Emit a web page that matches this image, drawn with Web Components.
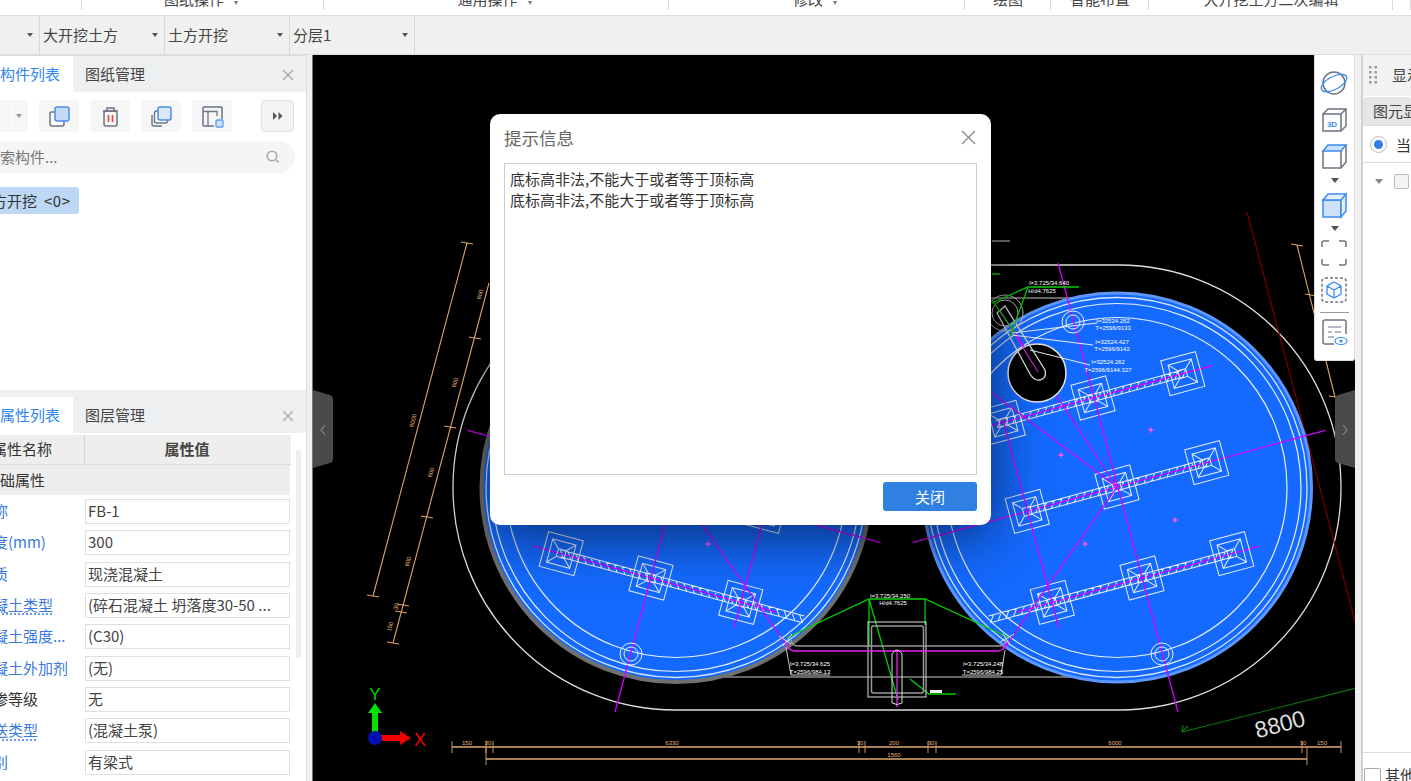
<!DOCTYPE html>
<html lang="zh">
<head>
<meta charset="utf-8">
<title>提示信息</title>
<style>
    html, body { margin: 0; height: 100%; overflow: hidden; background: #f0f0f0; }
    body { font: 15px "Noto Sans CJK SC", "Noto Sans", sans-serif; color: #333; }
</style>
</head>
<body>
<app-shell>
    <app-ribbon></app-ribbon>
    <app-toolbar></app-toolbar>
    <left-column></left-column>
    <cad-canvas>
        <view-tools></view-tools>
        <message-dialog title-text="提示信息">
            底标高非法,不能大于或者等于顶标高<br>底标高非法,不能大于或者等于顶标高
        </message-dialog>
    </cad-canvas>
    <display-panel></display-panel>
</app-shell>

<script>
class AppShell extends HTMLElement {
    connectedCallback() {
        this.attachShadow({ mode: 'open' });
        this.shadowRoot.innerHTML = `
            <style>
                :host { display: flex; flex-direction: column; width: 1411px; height: 781px; overflow: hidden; }
                .main { flex: 1; display: flex; min-height: 0; }
                ::slotted(left-column) { flex: none; }
            </style>
            <slot name="top"></slot>
            <div class="main"><slot></slot></div>
        `;
        this.querySelector('app-ribbon').slot = 'top';
        this.querySelector('app-toolbar').slot = 'top';
    }
}

class AppRibbon extends HTMLElement {
    connectedCallback() {
        const groups = [
            [82, '', 0], [242, '图纸操作', 1], [345, '通用操作', 1], [296, '修改', 1],
            [86, '绘图', 0], [98, '智能布置', 0], [244, '大开挖土方二次编辑', 0], [18, '', 0]
        ];
        this.attachShadow({ mode: 'open' });
        this.shadowRoot.innerHTML = `
            <style>
                :host { display: flex; height: 16px; background: #fff; border-bottom: 1px solid #dcdcdc; box-sizing: border-box; overflow: hidden; }
                .group { position: relative; height: 15px; display: flex; justify-content: center; color: #444; white-space: nowrap; line-height: 20px; box-sizing: border-box; }
                .group span { margin-top: -11px; }
                .group em { font-style: normal; font-size: 8px; margin: 0 4px 0 10px; color: #777; }
                .group::after { content: ""; position: absolute; right: 0; top: 0; height: 10px; width: 1px; background: #d8d8d8; }
            </style>
            ${groups.map(g => `<div class="group" style="width:${g[0]}px"><span>${g[1]}${g[2] ? '<em>▾</em>' : ''}</span></div>`).join('')}
        `;
    }
}

class AppToolbar extends HTMLElement {
    connectedCallback() {
        const combos = [[40, ''], [125, '大开挖土方'], [125, '土方开挖'], [125, '分层1']];
        this.attachShadow({ mode: 'open' });
        this.shadowRoot.innerHTML = `
            <style>
                :host { display: flex; height: 39px; background: #f0f0f0; border-bottom: 1px solid #dcdcdc; box-sizing: border-box; }
                .combo { display: flex; align-items: center; box-sizing: border-box; border-right: 1px solid #d8d8d8; padding: 0 6px 2px 3px; color: #444; }
                .combo span { flex: 1; }
                .combo i { width: 0; height: 0; border: 3.5px solid transparent; border-top: 4px solid #555; border-bottom: 0; margin-top: 2px; }
            </style>
            ${combos.map(c => `<div class="combo" style="width:${c[0]}px"><span>${c[1]}</span><i></i></div>`).join('')}
        `;
    }
}

class PanelTabs extends HTMLElement {
    connectedCallback() {
        this.attachShadow({ mode: 'open' });
        this.shadowRoot.innerHTML = `
            <style>
                :host { display: flex; align-items: stretch; height: 36px; background: #eeeff1; flex: none; }
                .active { width: 73px; background: #fff; color: #2f86ee; line-height: 36px; white-space: nowrap; }
                .other { margin-left: 12px; line-height: 36px; color: #444; flex: 1; }
                svg { margin: 13px 12px 0 0; }
            </style>
            <div class="active">${this.getAttribute('active')}</div>
            <div class="other">${this.getAttribute('other')}</div>
            <svg width="12" height="12" viewBox="0 0 12 12"><path d="M1 1l10 10M11 1L1 11" stroke="#aaa" stroke-width="1.4"/></svg>
        `;
    }
}

class ComponentPanel extends HTMLElement {
    connectedCallback() {
        const copy = `<rect x="3" y="8" width="14" height="14" rx="2" fill="#fff" stroke="#6b7484" stroke-width="1.5"/><rect x="8" y="3" width="14" height="14" rx="2" fill="#c5d9f5" stroke="#4a8fe8" stroke-width="1.5"/>`;
        const del = `<path d="M5 7h15M9 7V4h7v3" fill="none" stroke="#6b7484" stroke-width="1.5"/><rect x="6" y="7" width="13" height="15" rx="2" fill="none" stroke="#6b7484" stroke-width="1.5"/><path d="M10.500 11v7M14.500 11v7" stroke="#e8453c" stroke-width="1.6"/>`;
        const stack = `<path d="M3 11v9a2 2 0 0 0 2 2h8" fill="none" stroke="#6b7484" stroke-width="1.4"/><rect x="5.500" y="7" width="13" height="12" rx="2" fill="#fff" stroke="#6b7484" stroke-width="1.4"/><rect x="9" y="3" width="13" height="13" rx="2" fill="#dbe8fa" stroke="#4a8fe8" stroke-width="1.5"/>`;
        const save = `<path d="M14 22H4Q3 22 3 21V4Q3 3 4 3H21Q22 3 22 4V15" fill="none" stroke="#6b7484" stroke-width="1.5"/><path d="M3 7.500H17V12M8 7.500V22" stroke="#6b7484" stroke-width="1.300" fill="none"/><rect x="16" y="16" width="7" height="7" rx="1" fill="#cfe0f8" stroke="#5b9bef" stroke-width="1.300"/>`;
        this.attachShadow({ mode: 'open' });
        this.shadowRoot.innerHTML = `
            <style>
                :host { display: flex; flex-direction: column; height: 335px; background: #fff; border-top: 1px solid #dcdcdc; box-sizing: border-box; overflow: hidden; }
                .tools { display: flex; height: 32px; margin-top: 8px; flex: none; }
                .tool { width: 40px; height: 32px; border-radius: 4px; background: #f6f6f6; margin-left: 11px; display: flex; align-items: center; justify-content: center; }
                .first { width: 28px; margin-left: 0; justify-content: flex-end; padding-right: 6px; box-sizing: border-box; border-radius: 0 4px 4px 0; position: relative; }
                .first::before { content: ""; position: absolute; left: 11px; top: 0; bottom: 0; width: 1px; background: #fff; }
                .first i { width: 0; height: 0; border: 3px solid transparent; border-top: 4px solid #999; border-bottom: 0; }
                .more { width: 33px; margin-left: 29px; background: #f4f4f4; border: 1px solid #e2e2e2; box-sizing: border-box; }
                .search { display: flex; align-items: center; height: 32px; width: 310px; margin: 9px 0 0 -15px; padding-bottom: 1px; background: #f5f5f5; border-radius: 0 16px 16px 0; color: #777; flex: none; box-sizing: border-box; }
                .search span { flex: 1; }
                .search svg { margin: 1px 15px 0 0; }
                .chip { display: inline-block; align-self: flex-start; height: 27px; line-height: 27px; margin: 14px 0 0 0; background: #bcd8f4; border-radius: 0 3px 3px 0; width: 79px; overflow: hidden; white-space: nowrap; flex: none; }
                .chip span { display: block; margin-left: -23px; }
                .chip em { font-style: normal; margin-left: 7px; letter-spacing: .5px; }
            </style>
            <panel-tabs active="构件列表" other="图纸管理"></panel-tabs>
            <div class="tools">
                <div class="tool first"><i></i></div>
                <div class="tool"><svg width="25" height="25" viewBox="0 0 25 25">${copy}</svg></div>
                <div class="tool"><svg width="25" height="25" viewBox="0 0 25 25">${del}</svg></div>
                <div class="tool"><svg width="25" height="25" viewBox="0 0 25 25">${stack}</svg></div>
                <div class="tool"><svg width="25" height="25" viewBox="0 0 25 25">${save}</svg></div>
                <div class="tool more"><svg width="10" height="8" viewBox="0 0 10 8"><path d="M0 0l4 4-4 4zM5.500 0l4 4-4 4z" fill="#555"/></svg></div>
            </div>
            <div class="search">
                <span>搜索构件...</span>
                <svg width="14" height="14" viewBox="0 0 14 14"><circle cx="6" cy="6" r="4.700" fill="none" stroke="#aaa" stroke-width="1.6"/><path d="M9.500 9.500l3 3" stroke="#aaa" stroke-width="1.6"/></svg>
            </div>
            <div class="chip"><span>土方开挖<em>&lt;0&gt;</em></span></div>
        `;
    }
}

class PropRow extends HTMLElement {
    connectedCallback() {
        const kind = this.getAttribute('kind') || '';
        this.attachShadow({ mode: 'open' });
        this.shadowRoot.innerHTML = `
            <style>
                :host { display: flex; height: 31.330px; flex: none; }
                .name { width: 85px; overflow: hidden; white-space: nowrap; line-height: 29px; flex: none; color: #333; }
                .name span { display: block; margin-left: -22px; }
                .link { color: #3a78e0; }
                .under span { text-decoration: underline dotted; text-underline-offset: 3px; }
                .value { width: 205px; height: 25px; margin-top: 3px; box-sizing: border-box; border: 1px solid #dfdfdf; background: #fff; line-height: 21px; padding-left: 2px; color: #444; white-space: nowrap; overflow: hidden; }
            </style>
            <div class="name ${kind}"><span>${this.getAttribute('name')}</span></div>
            <div class="value">${this.getAttribute('value')}</div>
        `;
    }
}

class PropertyPanel extends HTMLElement {
    connectedCallback() {
        this.attachShadow({ mode: 'open' });
        this.shadowRoot.innerHTML = `
            <style>
                :host { display: flex; flex-direction: column; flex: 1; min-height: 0; margin-top: 7px; background: #fff; overflow: hidden; }
                .body { display: flex; flex: 1; min-height: 0; }
                .table { width: 291px; flex: none; padding-top: 2px; }
                .head { display: flex; height: 29px; background: #eee; border-bottom: 1px solid #dcdcdc; line-height: 28px; }
                .head .n { width: 84px; border-right: 1px solid #d6d6d6; overflow: hidden; white-space: nowrap; }
                .head .n span { display: block; margin-left: -8px; }
                .head .v { flex: 1; text-align: center; font-weight: 700; color: #444; margin-left: -2px; }
                .section { height: 30px; width: 290px; background: #eee; line-height: 30px; overflow: hidden; white-space: nowrap; margin-bottom: 1px; }
                .section span { display: block; margin-left: -15px; }
                .bar { width: 5px; height: 208px; margin: 17px 0 0 5px; background: #eee; border-radius: 2px; }
            </style>
            <panel-tabs active="属性列表" other="图层管理"></panel-tabs>
            <div class="body">
                <div class="table">
                    <div class="head"><div class="n"><span>属性名称</span></div><div class="v">属性值</div></div>
                    <div class="section"><span>基础属性</span></div>
                    <prop-row kind="link" name="名称" value="FB-1"></prop-row>
                    <prop-row kind="link" name="厚度(mm)" value="300"></prop-row>
                    <prop-row kind="link" name="材质" value="现浇混凝土"></prop-row>
                    <prop-row kind="link under" name="混凝土类型" value="(碎石混凝土 坍落度30-50 ..."></prop-row>
                    <prop-row kind="link" name="混凝土强度..." value="(C30)"></prop-row>
                    <prop-row kind="link" name="混凝土外加剂" value="(无)"></prop-row>
                    <prop-row name="抗渗等级" value="无"></prop-row>
                    <prop-row kind="link under" name="泵送类型" value="(混凝土泵)"></prop-row>
                    <prop-row kind="link" name="类别" value="有梁式"></prop-row>
                </div>
                <div class="bar"></div>
            </div>
        `;
    }
}

class LeftColumn extends HTMLElement {
    connectedCallback() {
        this.attachShadow({ mode: 'open' });
        this.shadowRoot.innerHTML = `
            <style>
                :host { display: flex; flex-direction: column; width: 307px; flex: none; background: #f0f0f0; border-right: 1px solid #dcdcdc; box-sizing: border-box; }
            </style>
            <component-panel></component-panel>
            <property-panel></property-panel>
        `;
    }
}

// the drawing is written in page coordinates, hence the viewBox
class CadCanvas extends HTMLElement {
    line(x1, y1, x2, y2, color, w = 1) {
        return `<line x1="${x1}" y1="${y1}" x2="${x2}" y2="${y2}" stroke="${color}" stroke-width="${w}"/>`;
    }

    label(x, y, text, color = '#fff', size = 6, rot = 0) {
        const t = rot ? ` transform="rotate(${rot} ${x} ${y})"` : '';
        return `<text x="${x}" y="${y}" fill="${color}" font-size="${size}" text-anchor="middle" font-family="Liberation Sans"${t}>${text}</text>`;
    }

    // foundation pad: outer + inner square with the slope lines
    cap(x) {
        const w = '#e8eefc';
        return `<g transform="translate(${x} 0)" fill="none" stroke="${w}" stroke-width="1">
            <rect x="-18" y="-18" width="36" height="36"/>
            <rect x="-12" y="-12" width="24" height="24"/>
            <path d="M-12-12L-4-4M12-12L4-4M-12 12L-4 4M12 12L4 4M-4-4H4V4H-4Z"/>
        </g>`;
    }

    strip(cx, cy, from, to, magFrom, magTo) {
        let hatch = '';
        for (let x = from; x < to; x += 8) hatch += `M${x} 3.500l5-7`;
        return `<g transform="translate(${cx} ${cy}) rotate(-15.200)">
            <path d="M${from}-3.500H${to}M${from} 3.500H${to}${hatch}" fill="none" stroke="#e8eefc" stroke-width="1"/>
            ${this.line(magFrom, 0, magTo, 0, '#d400ff', 1.300)}
            ${this.cap(-93)}${this.cap(0)}${this.cap(93)}
        </g>`;
    }

    well(x, y) {
        return `<circle cx="${x}" cy="${y}" r="11" fill="none" stroke="#e8eefc"/><circle cx="${x}" cy="${y}" r="7" fill="none" stroke="#e8eefc"/>`;
    }

    mark(x, y) {
        return `<path d="M${x - 3} ${y}h6M${x} ${y - 3}v6" stroke="#ff40ff" stroke-width="1"/><circle cx="${x}" cy="${y}" r="1.400" fill="#ff60ff"/>`;
    }

    // one tank; the left one is the same drawing mirrored
    tank(rim, rimWidth) {
        const m = '#d400ff';
        const c = { x: 1117, y: 487.500 };
        return `
            <circle cx="${c.x}" cy="${c.y}" r="194.500" fill="#146aff" stroke="${rim}" stroke-width="${rimWidth}"/>
            <circle cx="${c.x}" cy="${c.y}" r="190" fill="none" stroke="#d8e4ff" stroke-width="1.300"/>
            <circle cx="${c.x}" cy="${c.y}" r="184" fill="none" stroke="#e8eefc" stroke-width="1.200"/>
            <circle cx="${c.x}" cy="${c.y}" r="170" fill="none" stroke="#e8eefc" stroke-width="1.200"/>
            ${this.strip(1093, 398, -100, 93, -120, 123)}
            ${this.strip(1117, 487, -93, 93, -212, 216)}
            ${this.strip(1142, 578, -158, 93, -130, 122)}
            ${this.line(1058, 263, 1178, 712, m, 1.300)}
            ${this.line(992, 393, 1117, 487, m, 1.300)}
            ${this.line(1013, 330, 1117, 487, m, 1.300)}
            ${this.line(1117, 487, 1003, 650, m, 1.300)}
            ${this.line(1003, 420, 1059, 628, m, 1.300)}
            ${this.mark(1151, 430)}${this.mark(1061, 455)}${this.mark(1175, 520)}${this.mark(1085, 544)}
            ${this.well(1162, 654)}
        `;
    }

    dims() {
        const o = '#dca468';
        const b = '#a87f52';
        const oblique = [[467, 243, 373, 596], [489, 283, 393, 643], [1297, 245, 1335, 397]];
        const ticks = [[467, 243], [373, 596], [475, 338], [450, 427], [427, 517], [403, 605], [401, 612], [393, 643], [1297, 245], [1311, 295], [1335, 397]];
        const angled = [[415, 421, '6000', 6], [482, 295, '600', 6], [457, 383, '600', 6], [433, 473, '600', 6], [410, 562, '600', 6], [392, 627, '150', 6], [398, 607, '30', 6]];
        const stops = [452, 486, 493, 859, 865, 928, 936, 1302, 1341];
        const below = [[467, '150'], [488, '30'], [672, '6330'], [860, '30'], [894, '200'], [931, '30'], [1115, '6000'], [1303, '30'], [1322, '150']];
        return `
            ${oblique.map(l => this.line(...l, o, 1.100)).join('')}
            ${ticks.map(t => this.line(t[0] - 6, t[1] - 1, t[0] + 6, t[1] + 1, o, 1.100)).join('')}
            ${angled.map(a => this.label(a[0], a[1], a[2], '#e8b070', a[3], -75)).join('')}
            ${this.line(452, 747, 1341, 747, b, 2)}
            ${this.line(486, 759, 1307, 759, b, 2)}
            ${stops.map(x => this.line(x, 741, x, 753, '#c8965e', 1)).join('')}
            ${this.line(486, 747, 486, 765, '#c8965e', 1)}${this.line(1307, 747, 1307, 765, '#c8965e', 1)}
            ${below.map(l => this.label(l[0], 745, l[1], '#e8b070', 6)).join('')}
            ${this.label(894, 757, '1560', '#e8b070', 6)}
        `;
    }

    outlet() {
        const g = '#00d000';
        const w = '#ddd';
        return `
            <path d="M786 638L869 599H925L1010 638M869 599V647M869 599L898 700M925 599V625M910 679L929 694H956" fill="none" stroke="${g}" stroke-width="1.300"/>
            <rect x="868" y="622" width="58" height="75" fill="none" stroke="${w}"/>
            <rect x="871.500" y="626" width="52" height="67" rx="2" fill="none" stroke="#999" stroke-width="1.500"/>
            <path d="M791 640Q792 646 798 646H1000Q1005 646 1006 640" fill="none" stroke="#999" stroke-width="1.500"/>
            <path d="M786 640Q787 651 795 651H998Q1004 651 1005 643M897 651V707" fill="none" stroke="#f020f0" stroke-width="1.300"/>
            <path d="M892 703V654Q897 646 902 654V703Q897 706 892 703Z" fill="none" stroke="#ddd"/>
            <path d="M786 647L791 675H830M1005 650L1001 675H962" fill="none" stroke="#ccc"/>
            <path d="M779 636l12 8M792 634l-9 12M1000 642l14-8M1003 634l8 12" stroke="#ddd"/>
            ${this.label(810, 666, 'I=3.725/34.625')}${this.label(810, 674, 'T=2596/984.13')}
            ${this.label(983, 666, 'I=3.725/34.248')}${this.label(983, 674, 'T=2596/984.25')}
            ${this.label(890, 598, 'I=3.725/34.250')}${this.label(893, 605, 'H/d4.7625')}
            <rect x="930" y="690" width="12" height="3" fill="#eee"/>
        `;
    }

    pump() {
        const g = '#00d000';
        const w = '#e8eefc';
        return `
            <circle cx="1037" cy="373" r="29" fill="#000" stroke="#e8e8e8" stroke-width="1.500"/>
            <path d="M997 313L1005 306L1045 370Q1047 378 1040 380Q1034 381 1030 374Z" fill="none" stroke="#ddd" stroke-width="1.300"/>
            <path d="M1001 312L1038 372" stroke="#f020f0" stroke-width="1.100"/>
            <circle cx="1005" cy="313" r="13" fill="none" stroke="#bbb"/><circle cx="1005" cy="313" r="18" fill="none" stroke="#bbb"/>
            <path d="M992 303L1028 287H1079M1028 287L1010 337M992 300L1015 333M992 274H1000" fill="none" stroke="${g}" stroke-width="1.300"/>
            <path d="M1012 333L1097 323M1012 335L1093 345M1030 350L1090 365" stroke="${w}"/>
            ${this.well(1073, 322)}
            ${this.label(1049, 285, 'I=3.725/34.640')}${this.label(1042, 293, 'H/d4.7625')}
            ${this.label(1113, 323, 'I=32524.262')}${this.label(1113, 330, 'T=2596/9133')}
            ${this.label(1112, 344, 'I=32524.427')}${this.label(1112, 351, 'T=2596/9142')}
            ${this.label(1108, 364, 'I=32524.262')}${this.label(1108, 372, 'T=2596/9144.327')}
            ${this.line(992, 241, 1010, 241, '#ddd')}
        `;
    }

    axes() {
        return `
            <path d="M372 733V712H378V733Z M368 713L375 703L382 713Z" fill="#00e000"/>
            <path d="M380 735H401V741H380Z M400 731L411 738L400 745Z" fill="#f00000"/>
            <ellipse cx="375" cy="738" rx="7" ry="7" fill="#0010b0"/>
            <text x="375" y="700" fill="#00d000" font-size="17" text-anchor="middle" font-family="Liberation Sans">Y</text>
            <text x="420" y="746" fill="#f00000" font-size="18" text-anchor="middle" font-family="Liberation Sans">X</text>
        `;
    }

    connectedCallback() {
        this.attachShadow({ mode: 'open' });
        this.shadowRoot.innerHTML = `
            <style>
                :host { display: block; position: relative; width: 1043px; flex: none; margin: 0 6px 0 5px; background: #000; overflow: hidden; box-shadow: inset 1px 0 #777; }
                svg.plan { display: block; position: absolute; left: 0; top: 0; }
                .handle { position: absolute; }
            </style>
            <svg class="plan" width="1043" height="726" viewBox="312 55 1043 726">
                <defs><filter id="soft" x="-30%" y="-30%" width="160%" height="160%"><feGaussianBlur stdDeviation="30"/></filter></defs>
                <rect x="453" y="265" width="888" height="445" rx="222" fill="none" stroke="#ddd" stroke-width="1.300"/>
                ${this.line(1247, 212, 1360, 640, '#7a0000', 1.200)}
                <path d="M700 298H1120M700 677H1120" stroke="#888" stroke-width="1.300"/>
                <g transform="translate(1793 0) scale(-1 1)">${this.tank('#707070', 4)}</g>
                ${this.tank('#5c98ff', 3)}
                ${this.pump()}
                <rect x="490" y="124" width="501" height="411" rx="10" fill="#000" opacity=".6" filter="url(#soft)"/>
                ${this.outlet()}
                ${this.dims()}
                ${this.axes()}
                <path d="M1360 687L1182 732M1182 732l6-6M1182 732l1-7" stroke="#0a7a0a" stroke-width="1.200" fill="none"/>
                <text x="1282" y="732" fill="#ddd" font-size="23" text-anchor="middle" font-family="Liberation Sans" transform="rotate(-15 1282 732)">8800</text>
            </svg>
            <svg class="handle" style="left:1px;top:335px" width="21" height="80" viewBox="0 0 21 80"><path d="M0 0L17 5Q20 6 20 10V69Q20 72 17 73L0 78Z" fill="#4a4a4a"/><path d="M12 35L8 40L12 45" fill="none" stroke="#888" stroke-width="1.200"/></svg>
            <svg class="handle" style="left:1023px;top:335px" width="20" height="80" viewBox="0 0 20 80"><path d="M20 0L3 5Q0 6 0 10V69Q0 72 3 73L20 78Z" fill="#4a4a4a"/><path d="M8 35L12 40L8 45" fill="none" stroke="#888" stroke-width="1.200"/></svg>
            <slot></slot>
        `;
    }
}

class ViewTools extends HTMLElement {
    connectedCallback() {
        const g = '#6b7484';
        const b = '#3b8cf0';
        const caret = t => `<i class="caret" style="margin-top:${t}px"></i>`;
        const icon = (t, body) => `<svg style="margin-top:${t}px" width="28" height="28" viewBox="0 0 28 28" fill="none" stroke-width="1.500">${body}</svg>`;
        this.attachShadow({ mode: 'open' });
        this.shadowRoot.innerHTML = `
            <style>
                :host { position: absolute; left: 1002px; top: 0; width: 41px; height: 306px; box-sizing: border-box; background: #fff; border: 1px solid #dcdcdc; border-top: 0; border-radius: 0 0 3px 3px; display: flex; flex-direction: column; align-items: center; }
                svg { display: block; flex: none; margin-left: -2px; }
                .caret { width: 0; height: 0; border: 4px solid transparent; border-top: 5px solid #555; border-bottom: 0; flex: none; }
                .sep { width: 29px; height: 1px; background: #999; margin-top: 8px; flex: none; }
            </style>
            ${icon(14, `<circle cx="14" cy="14" r="11" stroke="${g}"/><ellipse cx="14" cy="14" rx="14" ry="6.500" transform="rotate(-28 14 14)" stroke="${b}" stroke-width="1.300"/>`)}
            ${icon(8, `<path d="M3 9L8 4H26V21L21 26H3Z" stroke="${g}"/><path d="M3 9H21V26M21 9L26 4" stroke="${g}"/><text x="12" y="22" fill="${b}" stroke="none" font-size="8" font-weight="700" text-anchor="middle" font-family="Liberation Sans">3D</text>`)}
            ${icon(9, `<path d="M3 9L8 3H26L21 9Z" fill="#c9def8" stroke="${b}"/><path d="M3 9V26H21V9M21 26L26 20V3" stroke="${g}"/>`)}
            ${caret(8)}
            ${icon(8, `<path d="M3 9H21V26H3Z" fill="#cfe2fb" stroke="${b}"/><path d="M3 9L8 3H26L21 9ZM21 9L26 3V20L21 26Z" fill="#e3eefc" stroke="${b}"/>`)}
            ${caret(7)}
            ${icon(8, `<path d="M2 8V4Q2 2 4 2H9M19 2H24Q26 2 26 4V8M26 20V24Q26 26 24 26H19M9 26H4Q2 26 2 24V20" stroke="${g}"/>`)}
            ${icon(9, `<rect x="2" y="2" width="24" height="24" rx="3" stroke="${g}" stroke-dasharray="3 2"/><path d="M14 6L21 10V18L14 22L7 18V10ZM7 10L14 14L21 10M14 14V22" stroke="${b}" stroke-width="1.300"/>`)}
            <div class="sep"></div>
            ${icon(5, `<path d="M14 26H5Q3 26 3 24V4Q3 2 5 2H24Q26 2 26 4V16" stroke="${g}"/><path d="M8 9H21M8 14H12M15 14H21M8 19H14" stroke="${g}" stroke-width="1.200"/><ellipse cx="21" cy="23" rx="6" ry="3.500" stroke="${b}" stroke-width="1.200"/><circle cx="21" cy="23" r="1.600" fill="${b}" stroke="none"/>`)}
        `;
    }
}

class MessageDialog extends HTMLElement {
    connectedCallback() {
        this.attachShadow({ mode: 'open' });
        this.shadowRoot.innerHTML = `
            <style>
                :host { position: absolute; left: 178px; top: 59px; width: 501px; height: 411px; box-sizing: border-box; padding: 0 14px; background: #fff; border-radius: 10px; display: flex; flex-direction: column; }
                .head { display: flex; align-items: center; justify-content: space-between; height: 49px; padding-bottom: 2px; box-sizing: border-box; flex: none; }
                .title { font-size: 17.500px; color: #666; }
                .msg { flex: 1; box-sizing: border-box; border: 1px solid #ccc; padding: 4px 5px; line-height: 21px; color: #333; }
                .foot { display: flex; justify-content: flex-end; height: 50px; flex: none; padding-top: 7px; box-sizing: border-box; }
                button { width: 94px; height: 29px; border: 0; border-radius: 3px; background: #2f80e0; color: #fff; font: inherit; padding: 0; }
                svg { margin-right: 1px; }
            </style>
            <div class="head">
                <span class="title">${this.getAttribute('title-text')}</span>
                <svg width="15" height="15" viewBox="0 0 15 15"><path d="M1 1l13 13M14 1L1 14" stroke="#888" stroke-width="1.300"/></svg>
            </div>
            <div class="msg"><slot></slot></div>
            <div class="foot"><button>关闭</button></div>
        `;
    }
}

class DisplayPanel extends HTMLElement {
    connectedCallback() {
        let dots = '';
        for (let y = 0; y < 18; y += 5) dots += `<rect x="0" y="${y}" width="2.500" height="2.500"/><rect x="5.500" y="${y}" width="2.500" height="2.500"/>`;
        this.attachShadow({ mode: 'open' });
        this.shadowRoot.innerHTML = `
            <style>
                :host { display: flex; flex-direction: column; width: 50px; flex: none; background: #fff; border-left: 2px solid #ced1d6; box-sizing: border-box; overflow: hidden; white-space: nowrap; }
                .head { display: flex; align-items: center; height: 41px; background: #f2f2f2; padding: 0 0 2px 6px; gap: 15px; color: #444; flex: none; box-sizing: border-box; }
                .head svg { flex: none; }
                .tabs { height: 30px; flex: none; border-bottom: 1px solid #dcdcdc; box-sizing: border-box; padding-top: 1px; }
                .tab { background: #e6e6e6; border-radius: 3px 3px 0 0; height: 28px; line-height: 28px; padding-left: 10px; color: #444; }
                .radio { display: flex; align-items: center; gap: 9px; height: 37px; padding-left: 7px; border-bottom: 1px solid #dcdcdc; flex: none; box-sizing: border-box; }
                .radio i { width: 17px; height: 17px; border: 1px solid #bbb; border-radius: 50%; box-sizing: border-box; flex: none; display: flex; align-items: center; justify-content: center; }
                .radio i::after { content: ""; width: 9px; height: 9px; background: #2f80e8; border-radius: 50%; }
                .tree { display: flex; align-items: flex-start; padding: 11px 0 0 12px; gap: 11px; flex: 1; box-sizing: border-box; }
                .tree b { width: 0; height: 0; border: 4px solid transparent; border-top: 5px solid #888; border-bottom: 0; margin-top: 5px; flex: none; }
                .tree i { width: 15px; height: 15px; border: 1px solid #bbb; border-radius: 2px; background: #f4f4f4; flex: none; box-sizing: border-box; }
                .foot { height: 29px; border-top: 1px solid #dcdcdc; flex: none; display: flex; gap: 4px; padding-top: 15px; box-sizing: border-box; line-height: 14px; }
                .foot i { width: 17px; height: 17px; border: 1px solid #aaa; border-radius: 2px; box-sizing: border-box; flex: none; margin-left: 1px; }
            </style>
            <div class="head"><svg width="8" height="18" viewBox="0 0 8 18" fill="#999">${dots}</svg><span>显示设置</span></div>
            <div class="tabs"><div class="tab">图元显示</div></div>
            <div class="radio"><i></i><span>当前楼层</span></div>
            <div class="tree"><b></b><i></i></div>
            <div class="foot"><i></i><span>其他</span></div>
        `;
    }
}

customElements.define('panel-tabs', PanelTabs);
customElements.define('prop-row', PropRow);
customElements.define('component-panel', ComponentPanel);
customElements.define('property-panel', PropertyPanel);
customElements.define('left-column', LeftColumn);
customElements.define('app-ribbon', AppRibbon);
customElements.define('app-toolbar', AppToolbar);
customElements.define('cad-canvas', CadCanvas);
customElements.define('view-tools', ViewTools);
customElements.define('message-dialog', MessageDialog);
customElements.define('display-panel', DisplayPanel);
customElements.define('app-shell', AppShell);
</script>
</body>
</html>
